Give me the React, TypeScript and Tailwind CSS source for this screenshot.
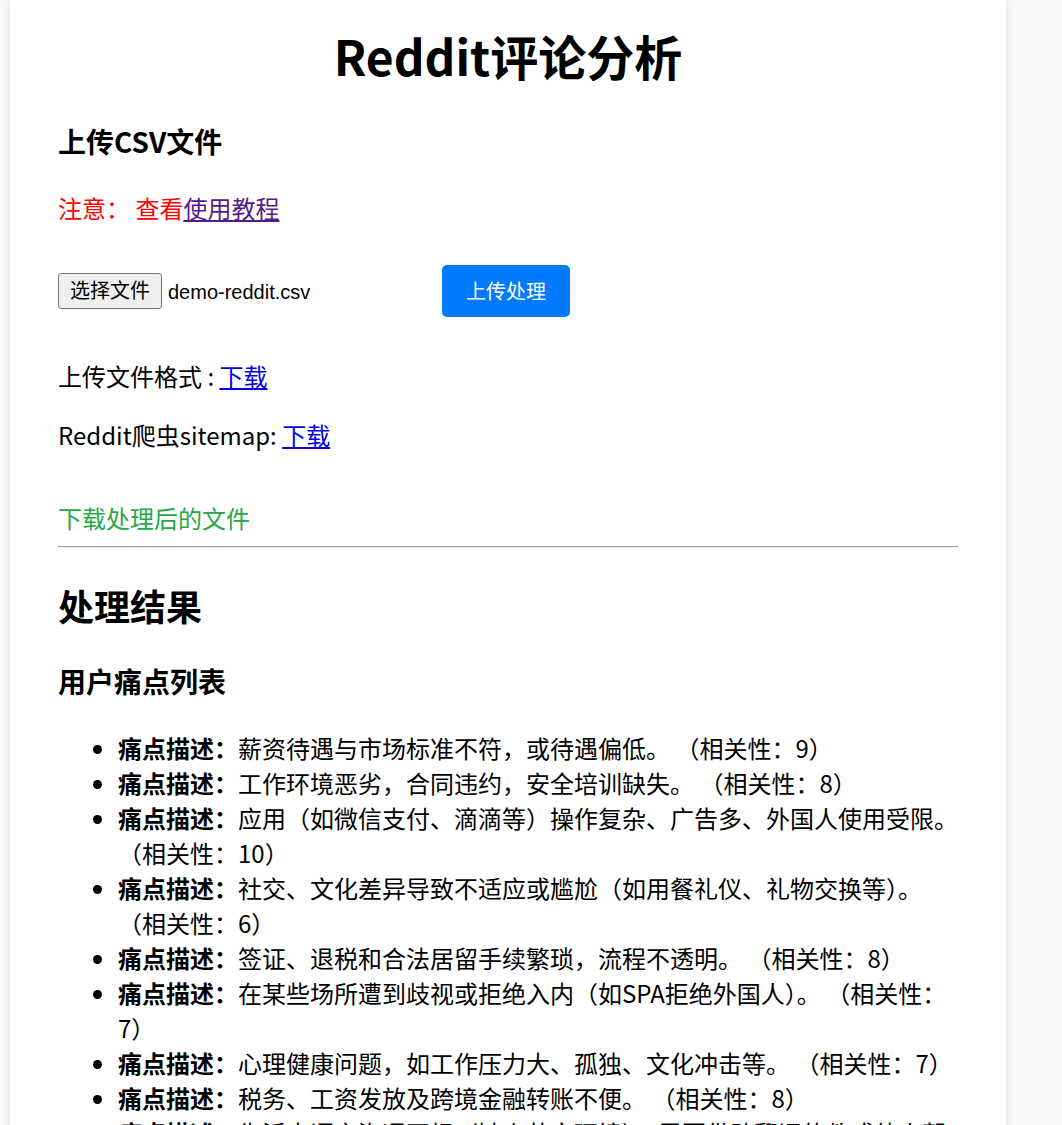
import React from 'react';

const painPoints: { text: string; score: number }[] = [
  { text: '薪资待遇与市场标准不符，或待遇偏低。', score: 9 },
  { text: '工作环境恶劣，合同违约，安全培训缺失。', score: 8 },
  { text: '应用（如微信支付、滴滴等）操作复杂、广告多、外国人使用受限。', score: 10 },
  { text: '社交、文化差异导致不适应或尴尬（如用餐礼仪、礼物交换等）。', score: 6 },
  { text: '签证、退税和合法居留手续繁琐，流程不透明。', score: 8 },
  { text: '在某些场所遭到歧视或拒绝入内（如SPA拒绝外国人）。', score: 7 },
  { text: '心理健康问题，如工作压力大、孤独、文化冲击等。', score: 7 },
  { text: '税务、工资发放及跨境金融转账不便。', score: 8 },
  { text: '生活中语言沟通不畅（缺少英文环境），需要借助翻译软件或他人帮助。', score: 9 },
];

export default function App() {
  return (
    <div className="min-h-screen bg-[#f9f9f9] font-['Noto_Sans_CJK_SC',sans-serif] text-black">
      <div className="ml-[10px] w-[996px] min-h-[1125px] bg-white px-[48px] pt-[20px] pb-[40px] shadow-[0_0_10px_rgba(0,0,0,0.1)]">
        <h1 className="text-center text-[48px] font-bold leading-[70px]">Reddit评论分析</h1>

        <h3 className="mt-[31px] text-[28px] font-bold leading-[41px]">上传CSV文件</h3>

        <p className="mt-[28px] text-[24px] leading-[35px] text-[#ff0000]">
          注意：&nbsp;查看
          <a href="#" className="text-[#551a8b] underline">使用教程</a>
        </p>

        <div className="mt-[40px] flex items-center">
          <div className="flex w-[380px] items-center font-['Liberation_Sans','Noto_Sans_CJK_SC',sans-serif] text-[20px]">
            <span className="rounded-[3px] border-[1.5px] border-[#767676] bg-[#efefef] px-[11px] leading-[34px]">
              选择文件
            </span>
            <span className="ml-[6px] pt-[2px]">demo-reddit.csv</span>
          </div>
          <button className="ml-[4px] rounded-[5px] bg-[#007bff] px-[24px] pt-[13px] pb-[11px] font-['Liberation_Sans','Noto_Sans_CJK_SC',sans-serif] text-[20px] leading-[28px] text-white">
            上传处理
          </button>
        </div>

        <p className="mt-[41px] text-[24px] leading-[35px]">
          上传文件格式 : <a href="#" className="text-[#0000ee] underline">下载</a>
        </p>
        <p className="mt-[24px] text-[24px] leading-[35px]">
          Reddit爬虫sitemap: <a href="#" className="text-[#0000ee] underline">下载</a>
        </p>

        <p className="mt-[48px] text-[24px] leading-[35px] text-[#28a745]">下载处理后的文件</p>

        <hr className="mt-[11px] border-t-[1px] border-b-[1px] border-t-[#9a9a9a] border-b-[#eeeeee]" />

        <h2 className="mt-[31px] text-[36px] font-bold leading-[52px]">处理结果</h2>

        <h3 className="mt-[30px] text-[28px] font-bold leading-[41px]">用户痛点列表</h3>

        <ul className="mt-[28px] list-disc pl-[60px] text-[24px] leading-[35px]">
          {painPoints.map((p, i) => (
            <li key={i}>
              <strong className="font-bold">痛点描述：</strong>{p.text} （相关性：{p.score}）
            </li>
          ))}
        </ul>
      </div>
    </div>
  );
}
